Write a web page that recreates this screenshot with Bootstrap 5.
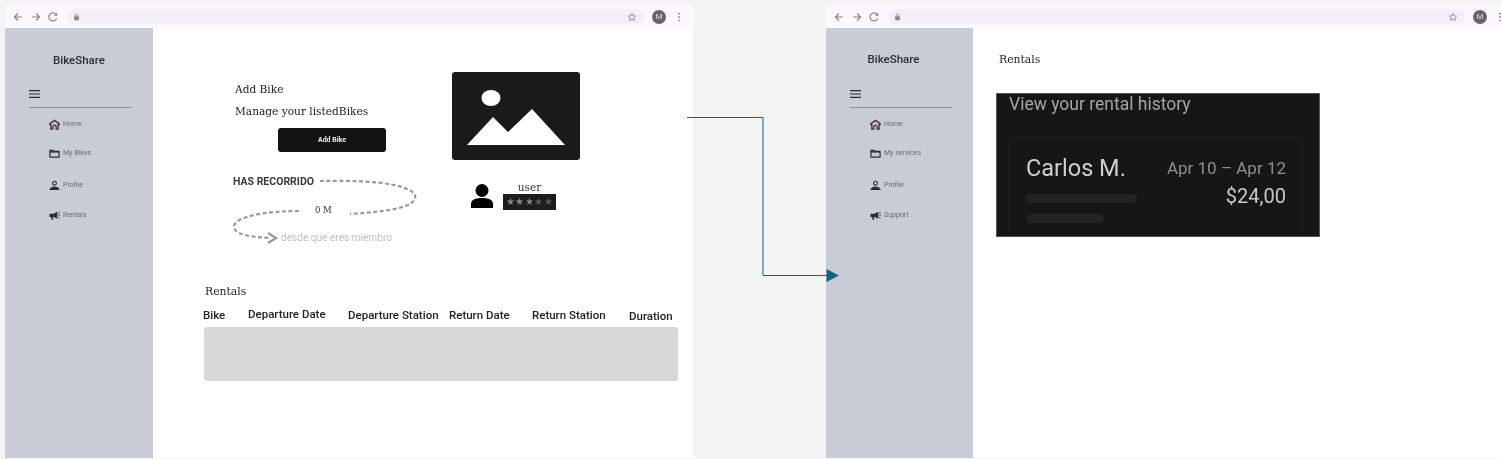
<!DOCTYPE html>
<html lang="en">
<head>
    <meta charset="UTF-8">
    <meta name="viewport" content="width=device-width, initial-scale=1.0">
    <title>BikeShare</title>
    <link href="https://cdn.jsdelivr.net/npm/bootstrap@5.3.3/dist/css/bootstrap.min.css" rel="stylesheet">
    <style>
        body {
            background-color: #f4f4f4;
            width: 1502px;
            height: 459px;
            overflow: hidden;
            position: relative;
            font-family: Roboto, sans-serif;
        }
        .sprite { display: none; }
        .browser-win {
            position: absolute;
            top: 5px;
            width: 688px;
            height: 453px;
            background: #fff;
            filter: blur(.45px);
        }
        .win-a { left: 5px; }
        .win-b { left: 826px; }
        .toolbar {
            height: 23px;
            background: #fdf8fd;
            padding-left: 7px;
            color: #858585;
        }
        .toolbar svg { flex: none; }
        .tool-gap { margin-right: 6px; }
        .tool-gap-2 { margin-right: 5px; }
        .address {
            width: 578px;
            height: 15px;
            margin-left: 8px;
            margin-right: 7px;
            background: #f3eef8;
            border-radius: 8px;
            padding: 0 8px 0 6px;
        }
        .avatar {
            width: 14px;
            height: 14px;
            border-radius: 50%;
            background: #69646c;
            color: #ddd;
            font-size: 8px;
            line-height: 14px;
            text-align: center;
            margin-right: 11px;
        }
        .side {
            width: 148px;
            height: 430px;
            flex: none;
            background: #c8ccd6;
            color: #6a6a70;
        }
        .side-b { width: 147px; }
        .side-logo {
            font-size: 11.5px;
            font-weight: 500;
            color: #2d2d33;
            text-align: center;
            line-height: 16px;
            padding-top: 24px;
        }
        .logo-b { padding-top: 23px; padding-right: 12px; }
        .side-menu {
            margin: 22px 21px 0 24px;
            padding-bottom: 9px;
            border-bottom: 1px solid #8c9099;
            line-height: 0;
        }
        .logo-b + .side-menu { margin-top: 23px; }
        .side-nav { padding: 10px 0 0 44px; font-size: 7px; line-height: 12px; }
        .side-nav svg { width: 11px; height: 11px; color: #2c2c30; margin-right: 3px; flex: none; }
        .nav-i { height: 12px; }
        .nav-i + .nav-i { margin-top: 17px; }
        .nav-i:nth-child(3) { margin-top: 20px; }
        .nav-i:nth-child(4) { margin-top: 18px; }
        .slab { font-family: "DejaVu Serif", serif; color: #222; }
        .main-a { padding: 44px 0 0 52px; }
        .main-left { width: 247px; padding-left: 30px; }
        .title-line { font-size: 10.6px; line-height: 16px; }
        .title-gap { margin-top: 9px; }
        .title-gap-2 { margin-top: 6px; }
        .btn-add {
            width: 108px;
            height: 24px;
            margin: 9px 0 0 43px;
            padding: 0;
            font-size: 7px;
            font-weight: 700;
            line-height: 24px;
            background: #141414;
            color: #eee;
            border: 0;
            border-radius: 3px;
            display: block;
        }
        .trip-map { display: block; margin: 18px 0 0 -7px; }
        .pic-box { width: 128px; height: 88px; background: #1a1a1a; border-radius: 3px; }
        .user-row { margin: 22px 0 0 18px; gap: 9px; }
        .user-name { font-size: 10.5px; line-height: 11px; text-align: center; color: #333; }
        .stars {
            width: 53px;
            height: 16px;
            background: #1d1d1d;
            font-size: 10px;
            line-height: 15px;
            letter-spacing: .4px;
            text-align: center;
            color: #8a8a8a;
            margin-top: 1px;
        }
        .stars i { color: #5a5a5a; font-style: normal; }
        .rentals-sec { margin: 36px 0 0 0; }
        .sec-title { font-size: 10.8px; line-height: 16px; }
        .col-heads {
            display: grid;
            grid-template-columns: 45px 100px 101px 83px 97px auto;
            margin: 8px 0 0 -2px;
            font-size: 11.5px;
            font-weight: 500;
            line-height: 14px;
            color: #222;
            white-space: nowrap;
        }
        .head-up { margin-top: -1px; }
        .head-down { margin-top: 1px; }
        .empty-rows { width: 474px; height: 54px; margin: 4px 0 0 -1px; background: #d8d8d8; border-radius: 3px; }
        .main-b { padding: 24px 0 0 26px; }
        .shot {
            width: 324px;
            height: 144px;
            margin: 25px 0 0 -3px;
            background: #161616;
            overflow: hidden;
            border: 1px solid #555;
        }
        .shot-title { font-size: 17.5px; line-height: 20px; color: #a6a6a6; padding: 0 0 0 12px; }
        .shot-card {
            margin: 23px 16px 0 11px;
            height: 110px;
            padding: 17px 16px 0 17px;
            border: 1px solid #1e1e1e;
            border-radius: 4px 4px 0 0;
        }
        .shot-name { font-size: 23.5px; line-height: 26px; color: #cfcfcf; }
        .shot-date { font-size: 17px; line-height: 26px; color: #8f8f8f; }
        .shot-price { font-size: 20px; line-height: 24px; color: #c8c8c8; margin-top: 3px; }
        .ghost-a { width: 111px; height: 9px; background: #232323; border-radius: 5px; margin-top: 13px; }
        .ghost-b { width: 78px; height: 9px; background: #232323; border-radius: 5px; margin-top: 11px; }
        .link-line { position: absolute; left: 0; top: 0; pointer-events: none; }
    </style>
</head>
<body>
    <svg class="sprite" xmlns="http://www.w3.org/2000/svg">
        <symbol id="i-back" viewBox="0 0 12 12"><path d="M10 6H2.500M6 2.500 2.500 6 6 9.500" fill="none" stroke="currentColor" stroke-width="1.200"/></symbol>
        <symbol id="i-fwd" viewBox="0 0 12 12"><path d="M2 6h7.500M6 2.500 9.500 6 6 9.500" fill="none" stroke="currentColor" stroke-width="1.200"/></symbol>
        <symbol id="i-reload" viewBox="0 0 12 12"><path d="M9.600 7.500A4 4 0 1 1 9 3.400" fill="none" stroke="currentColor" stroke-width="1.200"/><path d="M10.200 1.500v3.200H7z" fill="currentColor"/></symbol>
        <symbol id="i-lock" viewBox="0 0 8 10"><path d="M2.500 4V2.800a1.500 1.500 0 0 1 3 0V4" fill="none" stroke="currentColor"/><rect x="1" y="4" width="6" height="5" rx=".8" fill="currentColor"/></symbol>
        <symbol id="i-star" viewBox="0 0 12 12"><path d="m6 1.600 1.300 3 3.200.3-2.400 2.100.7 3.200L6 8.500l-2.800 1.700.7-3.200-2.400-2.100 3.200-.3z" fill="none" stroke="currentColor"/></symbol>
        <symbol id="i-dots" viewBox="0 0 4 12"><circle cx="2" cy="2" r="1.100" fill="currentColor"/><circle cx="2" cy="6" r="1.100" fill="currentColor"/><circle cx="2" cy="10" r="1.100" fill="currentColor"/></symbol>
        <symbol id="i-burger" viewBox="0 0 11 8"><path d="M0 .6h11M0 4h11M0 7.400h11" stroke="#2c2c30" stroke-width="1.100"/></symbol>
        <symbol id="i-home" viewBox="0 0 12 12"><path d="M6 1.500 11 5v1H10v5H7.800V8.500a1.800 1.800 0 0 0-3.600 0V11H2V6H1V5z" fill="none" stroke="#4a3236" stroke-width="1.500"/></symbol>
        <symbol id="i-folder" viewBox="0 0 12 12"><path d="M1 2.500h3.600l1 1.200H11V10H1z" fill="none" stroke="currentColor" stroke-width="1.300"/><path d="M1 3.500h10V5H1z" fill="currentColor"/></symbol>
        <symbol id="i-person" viewBox="0 0 12 12"><circle cx="6" cy="3.500" r="2.100" fill="none" stroke="currentColor" stroke-width="1.200"/><path d="M.5 10.500c.6-2.500 3.300-3.500 5.500-3.500s4.900 1 5.500 3.500v.5H.5z" fill="currentColor"/></symbol>
        <symbol id="i-horn" viewBox="0 0 12 12"><path d="M.5 4h4.500l4-2v7.500l-4-2H4l.8 3H3l-1-3H.5z" fill="currentColor"/><path d="M10 3.300l1.500-1M10 5.500h2M10 7.800l1.500 1" stroke="currentColor"/></symbol>
    </svg>

    <!-- left window -->
    <div class="browser-win win-a">
        <div class="toolbar d-flex align-items-center">
            <svg class="tool-gap" width="12" height="12"><use href="#i-back"/></svg>
            <svg class="tool-gap-2" width="12" height="12"><use href="#i-fwd"/></svg>
            <svg width="12" height="12"><use href="#i-reload"/></svg>
            <div class="address d-flex align-items-center justify-content-between">
                <svg width="7" height="8"><use href="#i-lock"/></svg>
                <svg width="10" height="10"><use href="#i-star"/></svg>
            </div>
            <div class="avatar">M</div>
            <svg width="4" height="10"><use href="#i-dots"/></svg>
        </div>
        <div class="d-flex">
            <aside class="side">
                <div class="side-logo">BikeShare</div>
                <div class="side-menu"><svg width="11" height="8"><use href="#i-burger"/></svg></div>
                <div class="side-nav">
                    <div class="nav-i d-flex align-items-center"><svg><use href="#i-home"/></svg>Home</div>
                    <div class="nav-i d-flex align-items-center"><svg><use href="#i-folder"/></svg>My Bikes</div>
                    <div class="nav-i d-flex align-items-center"><svg><use href="#i-person"/></svg>Profile</div>
                    <div class="nav-i d-flex align-items-center"><svg><use href="#i-horn"/></svg>Rentals</div>
                </div>
            </aside>
            <main class="main-a flex-grow-1">
                <div class="d-flex">
                    <div class="main-left">
                        <div class="title-line title-gap slab">Add Bike</div>
                        <div class="title-line title-gap-2 slab">Manage your listedBikes</div>
                        <button class="btn-add" type="button">Add Bike</button>
                        <svg class="trip-map" width="192" height="78" viewBox="0 0 192 78">
                            <path d="M92 11C130 10 180 12 187 25 191 39 150 42 122 44" fill="none" stroke="#9a9a9a" stroke-width="2.200" stroke-dasharray="4 2.500"/>
                            <path d="M71 41C40 41 8 46 6 56 5 64 20 67 43 68" fill="none" stroke="#9a9a9a" stroke-width="2.200" stroke-dasharray="4 2.500"/>
                            <path d="M40 63l8 5-8 5" fill="none" stroke="#9a9a9a" stroke-width="2.400"/>
                            <text x="5" y="15" font-family="Roboto, sans-serif" font-size="10.500" font-weight="700" fill="#3a3a3a">HAS RECORRIDO</text>
                            <text x="87" y="43" font-family="'DejaVu Serif', serif" font-size="8.500" fill="#2b2b2b">0 M</text>
                            <text x="53" y="71" font-family="Roboto, sans-serif" font-size="10.100" fill="#c0c0c0">desde que eres miembro</text>
                        </svg>
                    </div>
                    <div>
                        <div class="pic-box">
                            <svg width="128" height="88" viewBox="0 0 128 88">
                                <ellipse cx="39" cy="26" rx="9.500" ry="8" fill="#fff"/>
                                <path d="M15 73 41 45 56 60 80 37 113 73z" fill="#fff"/>
                            </svg>
                        </div>
                        <div class="user-row d-flex align-items-center">
                            <svg width="24" height="25" viewBox="0 0 24 25"><circle cx="12" cy="6.500" r="6.500" fill="#000"/><path d="M1 24v-4c0-4 4-6 11-6s11 2 11 6v4z" fill="#000" /></svg>
                            <div>
                                <div class="user-name slab">user</div>
                                <div class="stars">★★★<i>★★</i></div>
                            </div>
                        </div>
                    </div>
                </div>
                <section class="rentals-sec">
                    <div class="sec-title slab">Rentals</div>
                    <div class="col-heads">
                        <span>Bike</span>
                        <span class="head-up">Departure Date</span>
                        <span>Departure Station</span>
                        <span>Return Date</span>
                        <span>Return Station</span>
                        <span class="head-down">Duration</span>
                    </div>
                    <div class="empty-rows"></div>
                </section>
            </main>
        </div>
    </div>

    <!-- right window -->
    <div class="browser-win win-b">
        <div class="toolbar d-flex align-items-center">
            <svg class="tool-gap" width="12" height="12"><use href="#i-back"/></svg>
            <svg class="tool-gap-2" width="12" height="12"><use href="#i-fwd"/></svg>
            <svg width="12" height="12"><use href="#i-reload"/></svg>
            <div class="address d-flex align-items-center justify-content-between">
                <svg width="7" height="8"><use href="#i-lock"/></svg>
                <svg width="10" height="10"><use href="#i-star"/></svg>
            </div>
            <div class="avatar">M</div>
            <svg width="4" height="10"><use href="#i-dots"/></svg>
        </div>
        <div class="d-flex">
            <aside class="side side-b">
                <div class="side-logo logo-b">BikeShare</div>
                <div class="side-menu"><svg width="11" height="8"><use href="#i-burger"/></svg></div>
                <div class="side-nav">
                    <div class="nav-i d-flex align-items-center"><svg><use href="#i-home"/></svg>Home</div>
                    <div class="nav-i d-flex align-items-center"><svg><use href="#i-folder"/></svg>My services</div>
                    <div class="nav-i d-flex align-items-center"><svg><use href="#i-person"/></svg>Profile</div>
                    <div class="nav-i d-flex align-items-center"><svg><use href="#i-horn"/></svg>Support</div>
                </div>
            </aside>
            <main class="main-b flex-grow-1">
                <div class="sec-title slab">Rentals</div>
                <div class="shot">
                    <div class="shot-title">View your rental history</div>
                    <div class="shot-card d-flex justify-content-between">
                        <div>
                            <div class="shot-name">Carlos M.</div>
                            <div class="ghost-a"></div>
                            <div class="ghost-b"></div>
                        </div>
                        <div class="text-end">
                            <div class="shot-date">Apr 10 – Apr 12</div>
                            <div class="shot-price">$24,00</div>
                        </div>
                    </div>
                </div>
            </main>
        </div>
    </div>

    <!-- connector between the two screens -->
    <svg class="link-line" width="1502" height="459">
        <path d="M687 117.500H763.500" stroke="#17607f" fill="none"/>
        <path d="M763 118V275" stroke="#7ea8bc" stroke-width="2" fill="none"/>
        <path d="M763 275.500H828" stroke="#17607f" fill="none"/>
        <path d="M826.500 269 839 275.500 826.500 282z" fill="#17607f"/>
    </svg>
</body>
</html>
